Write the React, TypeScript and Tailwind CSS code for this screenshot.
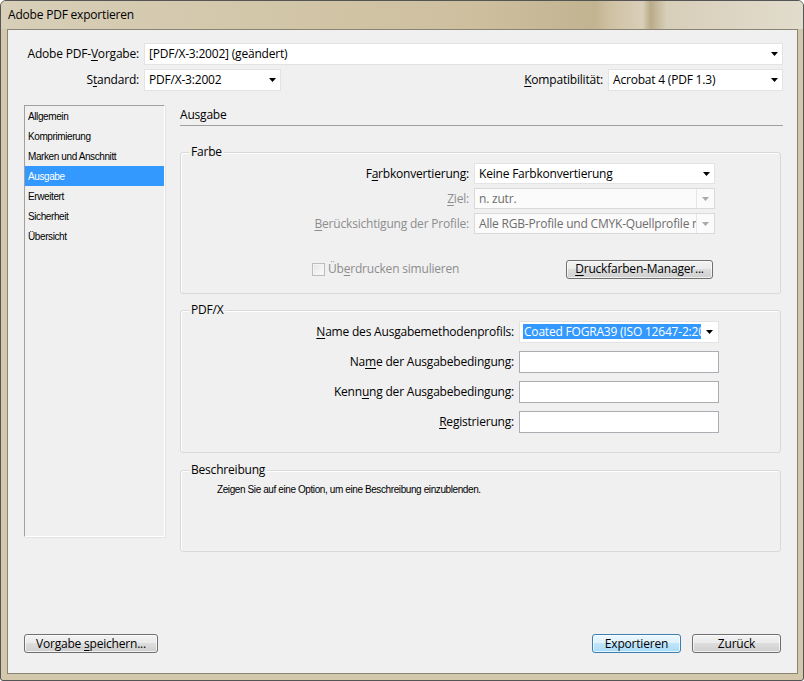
import React from 'react';

function Arrow({ disabled }: { disabled?: boolean }) {
  return (
    <svg width="7" height="4" viewBox="0 0 7 4" className="shrink-0">
      <polygon points="0,0 7,0 3.5,4" fill={disabled ? '#a9a9a9' : '#000000'} />
    </svg>
  );
}

function U({ children }: { children: React.ReactNode }) {
  return <span className="underline underline-offset-[2px] decoration-[1px]">{children}</span>;
}

function Dropdown({
  children,
  className,
  disabled,
}: {
  children: React.ReactNode;
  className?: string;
  disabled?: boolean;
}) {
  if (disabled) {
    return (
      <div className={`flex items-stretch bg-[#fbfbfb] border border-[#d9d9d9] ${className ?? ''}`}>
        <div className="flex-1 min-w-0 overflow-hidden whitespace-nowrap pl-[4px] text-[#6d6d6d] flex items-center">
          {children}
        </div>
        <div className="w-[18px] shrink-0 border-l border-[#e6e6e6] flex items-center justify-center">
          <Arrow disabled />
        </div>
      </div>
    );
  }
  return (
    <div className={`flex items-center bg-white border border-[#e3e3e3] ${className ?? ''}`}>
      <div className="flex-1 min-w-0 overflow-hidden whitespace-nowrap pl-[4px] flex items-center">
        {children}
      </div>
      <div className="w-[18px] shrink-0 flex items-center justify-center pl-[2px]">
        <Arrow />
      </div>
    </div>
  );
}

function Group({
  title,
  className,
  children,
}: {
  title: string;
  className?: string;
  children?: React.ReactNode;
}) {
  return (
    <div
      className={`relative w-[601px] rounded-[3px] border border-[#d9d9d9] shadow-[inset_1px_1px_0_#ffffff] ${className ?? ''}`}
    >
      <span className="absolute left-[8px] top-[-9px] bg-[#f0f0f0] px-[2px] leading-[16px]">{title}</span>
      {children}
    </div>
  );
}

function WinButton({
  children,
  className,
  primary,
}: {
  children: React.ReactNode;
  className?: string;
  primary?: boolean;
}) {
  return (
    <div
      className={`flex items-center justify-center h-[19px] rounded-[3px] border leading-none ${
        primary
          ? 'border-[#3c7fb1] bg-[linear-gradient(180deg,#ecf7fd_0%,#dff2fc_45%,#bfe6fb_50%,#a9dbf6_100%)]'
          : 'border-[#707070] bg-[linear-gradient(180deg,#f2f2f2_0%,#ebebeb_45%,#dddddd_50%,#cfcfcf_100%)]'
      } shadow-[inset_0_0_0_1px_rgba(255,255,255,0.7)] ${className ?? ''}`}
    >
      {children}
    </div>
  );
}

const listItems = [
  'Allgemein',
  'Komprimierung',
  'Marken und Anschnitt',
  'Ausgabe',
  'Erweitert',
  'Sicherheit',
  'Übersicht',
];

export default function App() {
  return (
    <div className="w-[804px] h-[681px] flex flex-col border border-[#555555] rounded-t-[6px] rounded-b-[3px] bg-[#d3c8ab] font-['Open_Sans',sans-serif] text-[12px] text-black overflow-hidden">
      {/* Title bar */}
      <div className="h-[28px] shrink-0 flex items-center pl-[7px] bg-[linear-gradient(90deg,#d8cfb9_0%,#d2c6a8_35%,#cdbf9e_60%,#c2b391_74%,#cfc2a3_76%,#d9cfb9_80%,#b9ab89_81%,#d8cfba_83%,#e2dccd_100%)]">
        <span className="text-[12px] leading-none tracking-[-0.2px]">Adobe PDF exportieren</span>
      </div>

      {/* Client area */}
      <div className="flex-1 ml-[6px] mr-[5px] mb-[6px] border border-[#8a8474] bg-[#f0f0f0] flex flex-col pl-[16px] pr-[14px] pt-[13px] tracking-[-0.2px]">
        {/* Row 1 */}
        <div className="flex items-center h-[22px] shrink-0">
          <div className="w-[115px] text-right whitespace-nowrap">
            Adobe PDF-<U>V</U>orgabe:
          </div>
          <Dropdown className="ml-[5px] flex-1 h-[22px]">[PDF/X-3:2002] (geändert)</Dropdown>
        </div>
        {/* Row 2 */}
        <div className="flex items-center h-[22px] mt-[4px] shrink-0">
          <div className="w-[115px] text-right whitespace-nowrap">
            S<U>t</U>andard:
          </div>
          <Dropdown className="ml-[5px] w-[137px] h-[22px]">PDF/X-3:2002</Dropdown>
          <div className="flex-1" />
          <div className="whitespace-nowrap mr-[5px]">
            <U>K</U>ompatibilität:
          </div>
          <Dropdown className="w-[175px] h-[22px]">Acrobat 4 (PDF 1.3)</Dropdown>
        </div>

        {/* Main */}
        <div className="flex mt-[14px] shrink-0">
          {/* Left list */}
          <div className="w-[141px] h-[432px] border border-t-[#a0a0a0] border-l-[#a0a0a0] border-r-[#ffffff] border-b-[#ffffff] shadow-[1px_1px_0_#e3e3e3] flex flex-col font-['Liberation_Sans',sans-serif] text-[10px] tracking-[-0.4px]">
            {listItems.map((item) => (
              <div
                key={item}
                className={`h-[20px] shrink-0 flex items-center pl-[3px] pt-[1px] ${
                  item === 'Ausgabe' ? 'bg-[#3399ff] text-white' : 'text-black'
                }`}
              >
                {item}
              </div>
            ))}
          </div>

          {/* Right panel */}
          <div className="ml-[15px] flex-1 flex flex-col">
            <div className="h-[21px] border-b border-[#a0a0a0] leading-[20px]">Ausgabe</div>

            {/* Farbe */}
            <Group title="Farbe" className="mt-[26px] h-[142px] pt-[10px]">
              <div className="flex flex-col gap-[4px]">
                <div className="flex items-center h-[21px]">
                  <div className="w-[288px] text-right whitespace-nowrap">
                    F<U>a</U>rbkonvertierung:
                  </div>
                  <Dropdown className="ml-[5px] w-[241px] h-[21px]">Keine Farbkonvertierung</Dropdown>
                </div>
                <div className="flex items-center h-[21px]">
                  <div className="w-[288px] text-right whitespace-nowrap text-[#8d8d8d]">
                    <U>Z</U>iel:
                  </div>
                  <Dropdown disabled className="ml-[5px] w-[241px] h-[21px]">
                    n. zutr.
                  </Dropdown>
                </div>
                <div className="flex items-center h-[21px]">
                  <div className="w-[288px] text-right whitespace-nowrap text-[#8d8d8d]">
                    <U>B</U>erücksichtigung der Profile:
                  </div>
                  <Dropdown disabled className="ml-[5px] w-[241px] h-[21px]">
                    Alle RGB-Profile und CMYK-Quellprofile nicht einschließen
                  </Dropdown>
                </div>
              </div>
              <div className="flex items-center h-[18px] mt-[26px] pl-[131px]">
                <div className="w-[13px] h-[13px] border border-[#bcbcbc] bg-[linear-gradient(135deg,#e6e6e6,#fbfbfb)] shadow-[inset_0_0_0_1px_#f4f4f4]" />
                <span className="ml-[3px] text-[#8d8d8d] whitespace-nowrap">
                  Üb<U>e</U>rdrucken simulieren
                </span>
                <WinButton className="ml-auto mr-[67px] w-[147px] h-[18px]">
                  <span>
                    <U>D</U>ruckfarben-Manager...
                  </span>
                </WinButton>
              </div>
            </Group>

            {/* PDF/X */}
            <Group title="PDF/X" className="mt-[16px] h-[143px] pt-[10px]">
              <div className="flex items-center h-[21px]">
                <div className="w-[333px] text-right whitespace-nowrap">
                  <U>N</U>ame des Ausgabemethodenprofils:
                </div>
                <div className="ml-[5px] w-[200px] h-[22px] flex items-center bg-white border border-[#e3e3e3]">
                  <div className="ml-[3px] w-[178px] h-[15px] overflow-hidden whitespace-nowrap bg-[#3399ff] text-white leading-[15px] pl-[1px]">
                    Coated FOGRA39 (ISO 12647-2:2004)
                  </div>
                  <div className="flex-1 flex items-center justify-center">
                    <Arrow />
                  </div>
                </div>
              </div>
              <div className="flex flex-col gap-[8px] mt-[9px]">
                <div className="flex items-center h-[22px]">
                  <div className="w-[333px] text-right whitespace-nowrap">
                    Na<U>m</U>e der Ausgabebedingung:
                  </div>
                  <div className="ml-[5px] w-[200px] h-[22px] bg-white border border-[#abadb3]" />
                </div>
                <div className="flex items-center h-[22px]">
                  <div className="w-[333px] text-right whitespace-nowrap">
                    Kenn<U>u</U>ng der Ausgabebedingung:
                  </div>
                  <div className="ml-[5px] w-[200px] h-[22px] bg-white border border-[#abadb3]" />
                </div>
                <div className="flex items-center h-[22px]">
                  <div className="w-[333px] text-right whitespace-nowrap">
                    <U>R</U>egistrierung:
                  </div>
                  <div className="ml-[5px] w-[200px] h-[22px] bg-white border border-[#abadb3]" />
                </div>
              </div>
            </Group>

            {/* Beschreibung */}
            <Group title="Beschreibung" className="mt-[17px] h-[82px] pt-[12px] pl-[36px]">
              <div className="font-['Liberation_Sans',sans-serif] text-[10px] tracking-[-0.4px] leading-[13px]">
                Zeigen Sie auf eine Option, um eine Beschreibung einzublenden.
              </div>
            </Group>
          </div>
        </div>

        {/* Bottom buttons */}
        <div className="mt-auto pb-[20px] flex items-center mr-[2px]">
          <WinButton className="w-[134px]">
            <span>
              Vorgabe <U>s</U>peichern...
            </span>
          </WinButton>
          <div className="flex-1" />
          <WinButton primary className="w-[89px]">
            Exportieren
          </WinButton>
          <WinButton className="w-[89px] ml-[11px]">Zurück</WinButton>
        </div>
      </div>
    </div>
  );
}
